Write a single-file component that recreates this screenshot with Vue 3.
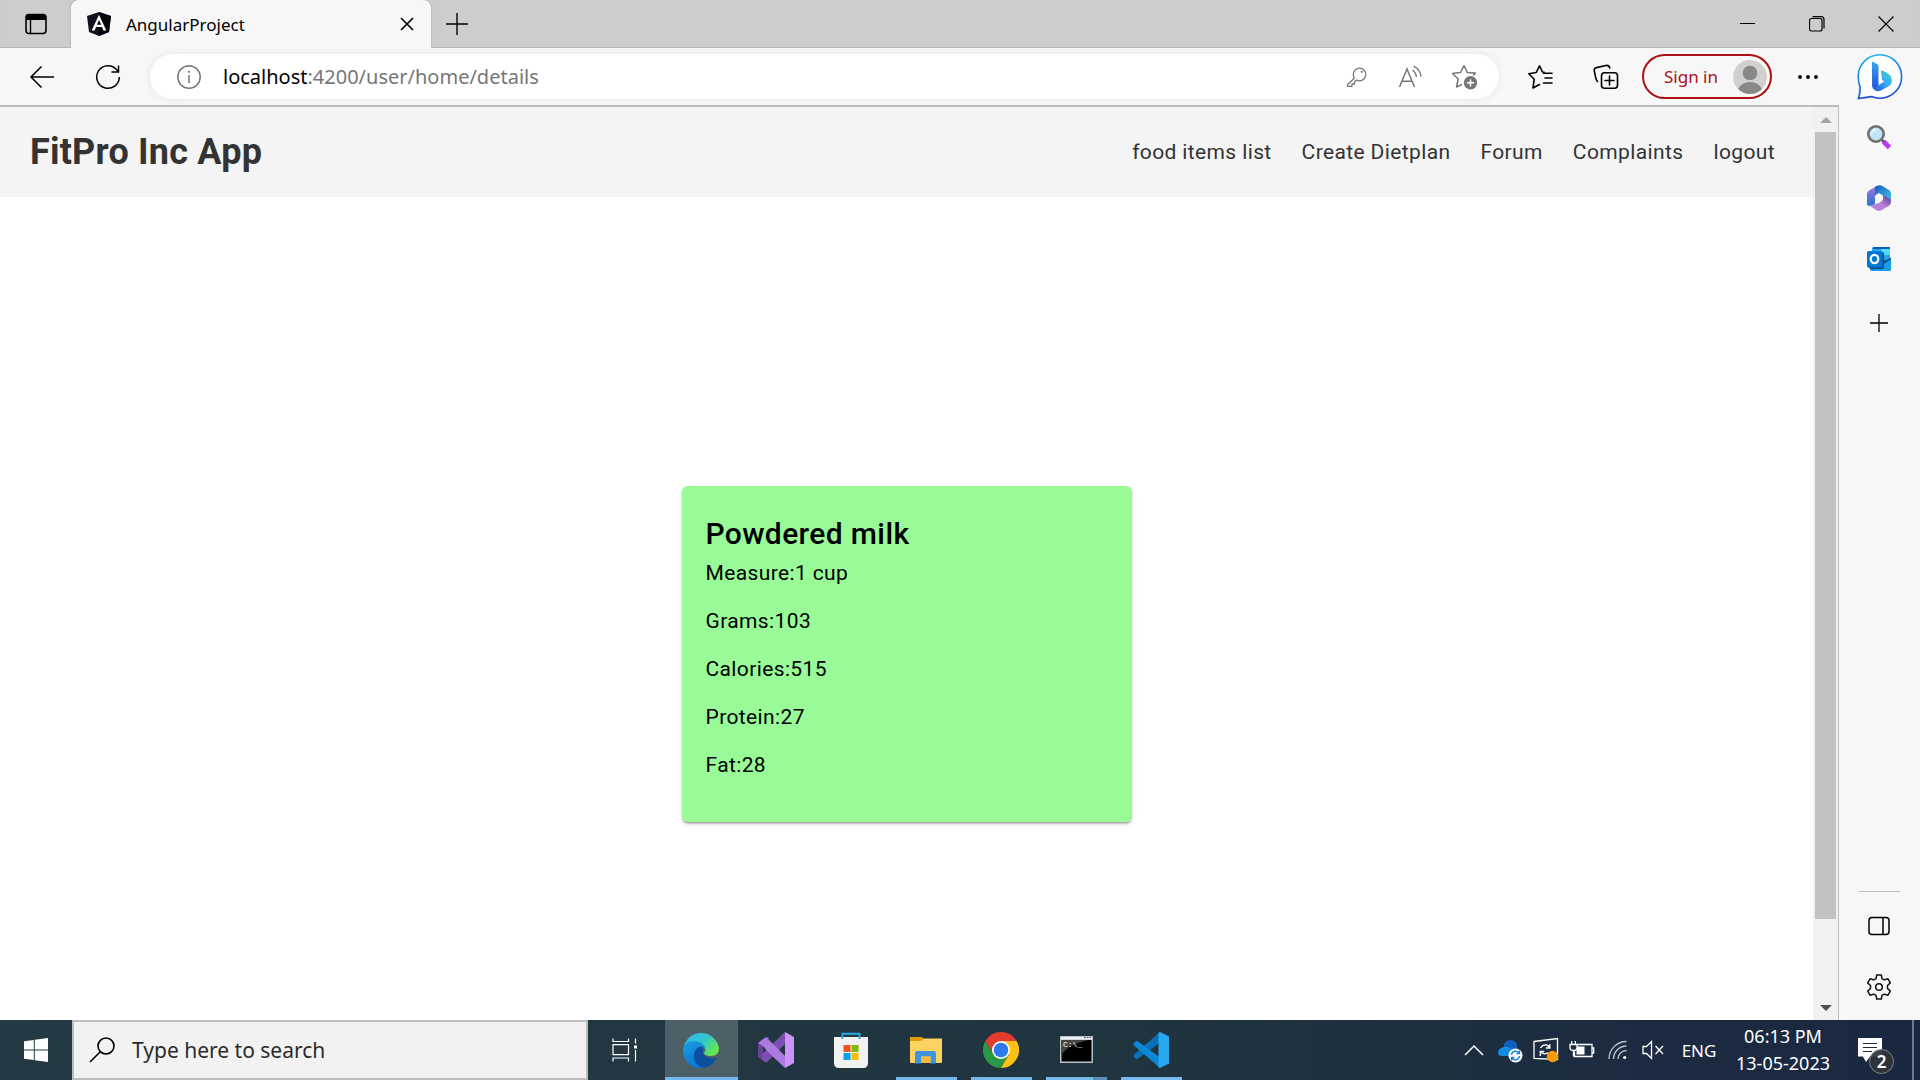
<script setup>
import { ref } from 'vue'

const path = ref(':4200/user/home/details')
const query = ref('')

const links = ['food items list', 'Create Dietplan', 'Forum', 'Complaints', 'logout']

const food = {
  name: 'Powdered milk',
  facts: [
    ['Measure', '1 cup'],
    ['Grams', '103'],
    ['Calories', '515'],
    ['Protein', '27'],
    ['Fat', '28'],
  ],
}
</script>

<template>
  <div class="desktop">
    <div class="tabstrip">
      <button class="tab-actions" aria-label="Tab actions">
        <svg width="24" height="24" viewBox="0 0 24 24"><rect x="2" y="2.5" width="20" height="19" rx="3" fill="none" stroke="#000" stroke-width="1.6" /><path d="M2 8V5q0-3 3-3h14q3 0 3 3v3z" /><path d="M6.500 8v13.500" stroke="#000" stroke-width="1.4" /></svg>
      </button>
      <div class="tab">
        <svg width="24" height="24" viewBox="0 0 24 24"><path d="M12 0l12 4-2 16-10 4-10-4L0 4z" fill="#10131f" /><path d="M12 0l12 4-2 16-10 4z" fill="#03050c" /><path d="M12 2.800L4.700 18.500h2.900l1.400-3.600h6l1.400 3.600h2.900zm0 5.300l2.200 4.700H9.800z" fill="#fff" fill-rule="evenodd" /></svg>
        <span class="tab-title">AngularProject</span>
        <button class="tab-close" aria-label="Close tab">
          <svg width="14" height="14" viewBox="0 0 14 14"><path d="M1 1l12 12M13 1L1 13" stroke="#000" stroke-width="1.6" /></svg>
        </button>
      </div>
      <button class="new-tab" aria-label="New tab">
        <svg width="22" height="22" viewBox="0 0 22 22"><path d="M11 0v22M0 11h22" stroke="#000" stroke-width="1.4" /></svg>
      </button>
      <div class="window-controls">
        <button aria-label="Minimize"><svg width="16" height="16" viewBox="0 0 16 16"><path d="M0 7.500h15" stroke="#000" /></svg></button>
        <button aria-label="Restore"><svg width="16" height="16" viewBox="0 0 16 16"><rect x=".5" y="2.500" width="12.500" height="12.500" rx="2" fill="none" stroke="#000" stroke-width="1.200" /><path d="M3.500.600h8.500a3 3 0 0 1 3 3v9" fill="none" stroke="#000" stroke-width="1.200" /></svg></button>
        <button aria-label="Close"><svg width="16" height="16" viewBox="0 0 16 16"><path d="M.5.5l15 15m0-15l-15 15" stroke="#000" stroke-width="1.200" /></svg></button>
      </div>
    </div>

    <div class="toolbar">
      <button class="tool" aria-label="Back">
        <svg width="26" height="24" viewBox="0 0 26 24"><path d="M25 12H2M12.500 1.500L2 12l10.500 10.500" fill="none" stroke="#000" stroke-width="1.500" /></svg>
      </button>
      <button class="tool" aria-label="Refresh">
        <svg width="26" height="26" viewBox="0 0 26 26"><path d="M24.300 13A11.300 11.300 0 1 1 21.800 5.900L23.500 8M23.500 1.500V8h-7" fill="none" stroke="#000" stroke-width="1.500" /></svg>
      </button>
      <div class="address">
        <button class="site-info" aria-label="Site information">
          <svg width="24" height="24" viewBox="0 0 24 24"><circle cx="12" cy="12" r="11.200" fill="none" stroke="#767676" stroke-width="1.500" /><path d="M12 10v8" stroke="#767676" stroke-width="1.500" /><circle cx="12" cy="6.800" r="1.100" fill="#767676" /></svg>
        </button>
        <label for="url">localhost</label>
        <input id="url" v-model="path" type="text" />
        <button class="address-tool" aria-label="Passwords">
          <svg width="22" height="22" viewBox="0 0 22 22" fill="none" stroke="#767676" stroke-width="1.300"><path d="M8 12.500L1.500 18.500V20.300H6V18H8.500V15.800L10.500 14a6.300 6.300 0 1 0-2.300-2.200z" stroke-linejoin="round" /><circle cx="15.800" cy="5.800" r="1.100" fill="#767676" stroke="none" /></svg>
        </button>
        <button class="address-tool" aria-label="Read aloud">
          <svg width="26" height="24" viewBox="0 0 26 24" fill="none" stroke="#767676" stroke-width="1.500"><path d="M1.500 22L9 4l7.500 18M4 16.300h10" /><path d="M14.500 5q3.500 2.500 4 7M15.500 1.200q7 3.500 7.500 10.500" stroke-width="1.300" /></svg>
        </button>
        <button class="address-tool" aria-label="Add to favorites">
          <svg width="28" height="28" viewBox="0 0 28 28"><path d="M13 2.500l3.300 7 8 .6-2 2.400M13 2.500l-3.500 7L1.500 10.500l5.700 5.500L5.500 24l5.500-2.500" fill="none" stroke="#767676" stroke-width="1.500" stroke-linejoin="round" /><circle cx="19.500" cy="19.800" r="6.700" fill="#767676" /><path d="M19.500 16.200v7.200M15.900 19.800h7.200" stroke="#fff" stroke-width="1.500" /></svg>
        </button>
      </div>
      <button class="tool" aria-label="Favorites">
        <svg width="26" height="26" viewBox="0 0 26 26" fill="none" stroke="#000" stroke-width="1.600" stroke-linejoin="round" stroke-linecap="round"><path d="M17 8.300l-1.500-.3L12.500 1.800 9.200 8.500 1.800 9.700l5.400 5.500L6 24l6.500-3.500M16.500 9.300H25M18 14h7M16.500 19H25" /></svg>
      </button>
      <button class="tool" aria-label="Collections">
        <svg width="26" height="26" viewBox="0 0 26 26" fill="none" stroke="#000" stroke-width="1.600" stroke-linecap="round"><path d="M4.500 17.500Q3.200 16 2.800 14L1.300 7Q.800 4.300 3.500 3.600L13 1.500Q16 1 16.800 4" /><rect x="8.500" y="8.800" width="16" height="15.500" rx="3" /><path d="M16.500 12v9M12 16.500h9" /></svg>
      </button>
      <button class="sign-in">
        <span>Sign in</span>
        <svg width="34" height="34" viewBox="0 0 34 34"><circle cx="17" cy="17" r="17" fill="#d2d0ce" /><circle cx="17" cy="13" r="7.300" fill="#8a8886" /><path d="M5 29q4-7 12-7t12 7q-5 5-12 5T5 29z" fill="#8a8886" /></svg>
      </button>
      <button class="more" aria-label="Settings and more">
        <svg width="20" height="4" viewBox="0 0 20 4"><circle cx="2" cy="2" r="1.900" /><circle cx="10" cy="2" r="1.900" /><circle cx="18" cy="2" r="1.900" /></svg>
      </button>
      <button class="bing" aria-label="Bing">
        <svg width="48" height="48" viewBox="0 0 48 48">
          <defs>
            <linearGradient id="bingRing" x1="0" y1="0" x2=".3" y2="1"><stop offset="0" stop-color="#17bdf0" /><stop offset="1" stop-color="#1c50d8" /></linearGradient>
            <linearGradient id="bingStem" x1="0" y1="0" x2="0" y2="1"><stop offset="0" stop-color="#37a5ee" /><stop offset="1" stop-color="#2050dc" /></linearGradient>
            <linearGradient id="bingBowl" x1="1" y1="0" x2="0" y2="1"><stop offset="0" stop-color="#30dfc9" /><stop offset=".5" stop-color="#3aa5f2" /><stop offset="1" stop-color="#1d54de" /></linearGradient>
          </defs>
          <path d="M2.500 46V24A21.800 21.800 0 1 1 24 45.500q-5-.500-8-1.800-5 1-13.500 2z" transform="translate(0 1)" fill="#000" opacity=".12" />
          <path d="M2.500 45.500Q4.500 39 4.200 34.500 2.200 29 2.200 23.500A21.700 21.700 0 1 1 24 45.200q-4 0-8.500-1.600-4 .4-13 1.900z" fill="#fff" stroke="url(#bingRing)" stroke-width="1.600" />
          <path d="M16 8.500l5 2.500q1.500.700 1.500 2.500v18.500l-3 5q-3.500-1-3.500-5z" fill="url(#bingStem)" />
          <path d="M25 18.500q-.500-1.500 1-1 10 3.500 10 10 0 3-2 5l-9.500 5.200q-5 1.500-6.800-2.200l10.500-7.300-2-1.200z" fill="url(#bingBowl)" />
        </svg>
      </button>
    </div>

    <div class="body">
      <div class="viewport">
        <div class="page">
          <header class="site-header">
            <h1>FitPro Inc App</h1>
            <nav>
              <a v-for="link in links" :key="link" href="#">{{ link }}</a>
            </nav>
          </header>
          <main>
            <article class="card">
              <h2>{{ food.name }}</h2>
              <p v-for="[label, value] in food.facts" :key="label">{{ label }}:{{ value }}</p>
            </article>
          </main>
        </div>
        <div class="scrollbar">
          <button aria-label="Scroll up"><svg width="12" height="6" viewBox="0 0 12 6"><path d="M6 0l6 6H0z" fill="#a3a3a3" /></svg></button>
          <div class="track"><div class="thumb"></div></div>
          <button aria-label="Scroll down"><svg width="12" height="6" viewBox="0 0 12 6"><path d="M6 6l6-6H0z" fill="#505050" /></svg></button>
        </div>
      </div>

      <aside class="sidebar">
        <button aria-label="Search">
          <svg width="26" height="26" viewBox="0 0 26 26"><path d="M17.500 17.500l6 6" stroke="#b83cf5" stroke-width="5" /><path d="M15.500 15.500l2.500 2.500" stroke="#5d5d5d" stroke-width="2.500" /><circle cx="10" cy="10" r="7.700" fill="#bfe3f8" stroke="#6f6f6f" stroke-width="2.600" /><path d="M5.500 10.500a5 5 0 0 1 5-5" stroke="#e3f4fd" stroke-width="2" fill="none" /></svg>
        </button>
        <button aria-label="Microsoft 365">
          <svg width="26" height="26" viewBox="0 0 26 26">
            <defs>
              <linearGradient id="mLeft" x1="0" y1="0" x2="0" y2="1"><stop offset="0" stop-color="#a779dc" /><stop offset=".6" stop-color="#5a6fd8" /><stop offset="1" stop-color="#2d79cf" /></linearGradient>
              <linearGradient id="mTop" x1="0" y1="0" x2="1" y2="1"><stop offset="0" stop-color="#155bb4" /><stop offset="1" stop-color="#49c7f7" /></linearGradient>
              <linearGradient id="mBottom" x1="1" y1="0" x2="0" y2="1"><stop offset="0" stop-color="#533b92" /><stop offset=".5" stop-color="#b67fd8" /><stop offset="1" stop-color="#b286e0" /></linearGradient>
            </defs>
            <path d="M11 1L3 5.500Q1 6.600 1 9v9.500Q1 21 3.500 21 6 21 9 19V11q0-2 2-3z" fill="url(#mLeft)" />
            <path d="M9 1.800Q13-1 16.500 1l6.500 4q2 1.200 2 3.500v8.500L17 12V11l-4-3-4 3z" fill="url(#mTop)" />
            <path d="M17 14v-3.500l6 2.500q2 1 2 3.500 0 3-2 4.200l-7 4.300q-3 1.700-6 0L4.500 21.200 9.500 19l3.500-1z" fill="url(#mBottom)" />
            <circle cx="13" cy="13" r="4.200" fill="#f7f7f7" />
          </svg>
        </button>
        <button aria-label="Outlook">
          <svg width="26" height="26" viewBox="0 0 26 26"><path d="M6 3q0-2 2-2h15q1 0 1 1v14H6z" fill="#28a8ea" /><path d="M15 1.500h9v7.500h-9z" fill="#50d9ff" /><path d="M7 1h17v2H7z" fill="#0a5fb0" /><path d="M4 14h21v9q0 2-2 2H6q-2 0-2-2z" fill="#1490df" /><path d="M25 11.500v13L15 16.500z" fill="#0f4d90" /><path d="M25 13v10.500q0 1.500-2 1.500H6l12-7z" fill="#189be8" /><rect x="3" y="6" width="15" height="17" rx="2" fill="#0b4a88" /><rect x="1" y="5" width="15.500" height="16.500" rx="1.500" fill="#0078d4" /><ellipse cx="8.500" cy="13" rx="3.800" ry="4.100" fill="none" stroke="#fff" stroke-width="2.200" /></svg>
        </button>
        <button class="add-app" aria-label="Customize sidebar">
          <svg width="18" height="18" viewBox="0 0 18 18"><path d="M9 0v18M0 9h18" stroke="#000" stroke-width="1.300" /></svg>
        </button>
        <hr />
        <button aria-label="Hide sidebar">
          <svg width="22" height="20" viewBox="0 0 22 20" fill="none" stroke="#000" stroke-width="1.500"><rect x="1" y="1.500" width="20" height="17" rx="3" /><path d="M15 1.500v17" /></svg>
        </button>
        <button aria-label="Sidebar settings">
          <svg width="26" height="26" viewBox="0 0 26 26" fill="none" stroke="#111" stroke-width="1.500" stroke-linejoin="round"><path d="M10.700 1h4.600l.7 3.600 2.200 1.300L21.800 4.700l2.500 4.200L21.500 11.500v3l2.800 2.600-2.500 4.200-3.600-1.200L16 21.400 15.300 25h-4.600L10 21.400l-2.200-1.300-3.600 1.200-2.500-4.200 2.800-2.600v-3L1.700 8.900l2.500-4.200L7.800 5.900 10 4.600z" /><circle cx="13" cy="13" r="3.300" /></svg>
        </button>
      </aside>
    </div>

    <footer class="taskbar">
      <button class="start" aria-label="Start">
        <svg width="24" height="24" viewBox="0 0 24 24" fill="#fff"><path d="M0 3.300L9.800 2v9.500H0zM10.800 1.800L24 0v11.500H10.800zM0 12.500h9.800V22L0 20.700zM10.800 12.500H24V24l-13.200-1.800z" /></svg>
      </button>
      <label class="search">
        <svg width="26" height="26" viewBox="0 0 26 26" fill="none" stroke="#000" stroke-width="1.600"><circle cx="17" cy="9" r="8" /><path d="M11.300 14.700L1 25" /></svg>
        <input v-model="query" type="text" placeholder="Type here to search" aria-label="Type here to search" />
      </label>
      <button class="task" aria-label="Task view">
        <svg width="26" height="24" viewBox="0 0 26 24" fill="none" stroke="#fff" stroke-width="1.200"><path d="M1 .5v3h15.500v-3M1 23.500v-3.500h15.500v3.500M1 6.700h15.500v10H1zM23.500.5v5M23.500 12v11.500" /><path d="M22 7.500h3v3h-3z" fill="#fff" stroke="none" /></svg>
      </button>
      <button class="task active open" aria-label="Microsoft Edge">
        <svg width="36" height="36" viewBox="0 0 36 36">
          <defs>
            <linearGradient id="edgeTop" x1="0" y1="0" x2="1" y2=".6"><stop offset="0" stop-color="#35b8f0" /><stop offset=".55" stop-color="#2fc6cf" /><stop offset="1" stop-color="#66e84c" /></linearGradient>
            <linearGradient id="edgeLeft" x1="0" y1="0" x2=".5" y2="1"><stop offset="0" stop-color="#1aa0e0" /><stop offset="1" stop-color="#0a76d6" /></linearGradient>
          </defs>
          <path d="M1 14A18 18 0 0 1 36 16q0 8-8 8-7 0-7-3.500 1.500-1.500 1.500-3.500L12 10z" fill="url(#edgeTop)" />
          <path d="M0 18Q.5 9.500 10 9q10 0 12.500 8-4-4-8-1-3 3-2 9.500Q14.500 33 22 35.500 10 38 3.500 29 0 24 0 18z" fill="url(#edgeLeft)" />
          <path d="M15 15.700Q17 14 20.500 15q-2.500 5 1 8.500 5 4.500 11.500 2 1-.3.700.7Q29 34.500 21 35.700q-8.500-2-10-9-1-7.500 4-11z" fill="#0c4fa0" />
        </svg>
      </button>
      <button class="task" aria-label="Visual Studio">
        <svg width="36" height="36" viewBox="0 0 36 36"><path d="M0 11l5-4v22l-5-4z" fill="#6a4399" /><path d="M5 7l5-2 1 1L5 15z" fill="#8a5cbf" /><path d="M5 29l3.500 1.500L27 12V0L4 22z" fill="#7a4fb0" /><path d="M0 11l8-6 19 19v12L10 20 5 14z" fill="#ad7ae0" /><path d="M27 0l9 5v26l-9 5z" fill="#cc94fb" /></svg>
      </button>
      <button class="task" aria-label="Microsoft Store">
        <svg width="36" height="36" viewBox="0 0 36 36"><path d="M1 5h34v26q0 5-5 5H6q-5 0-5-5z" fill="#f2f2f2" /><path d="M9.500 7V1.700h17V7" fill="none" stroke="#25abe8" stroke-width="2" /><path d="M10.500 13h7v7h-7z" fill="#f25022" /><path d="M18.500 13h7v7h-7z" fill="#7fba00" /><path d="M10.500 21h7v7h-7z" fill="#00a4ef" /><path d="M18.500 21h7v7h-7z" fill="#ffb900" /></svg>
      </button>
      <button class="task open inset" aria-label="File Explorer">
        <svg width="36" height="36" viewBox="0 0 36 36"><path d="M2 5h12l2 2-2 4H2z" fill="#dd9b00" /><path d="M2 9h11l3-2.500h18V30q0 1-1 1H3q-1 0-1-1z" fill="#fdd263" /><path d="M7 31.500V21q0-2 2-2h17q2 0 2 2v10.500h-5.500V24.500h-9.500v7z" fill="#3b96df" /><path d="M13 24.500h9.500V31H13z" fill="#f5b93b" /></svg>
      </button>
      <button class="task open inset" aria-label="Google Chrome">
        <svg width="36" height="36" viewBox="0 0 36 36"><path d="M2.400 9A18 18 0 0 1 33.600 9H18L10.200 22.500z" fill="#e33b2e" /><path d="M2.400 9A18 18 0 0 0 18 36l7.800-13.500H10.200z" fill="#2a9947" /><path d="M33.600 9A18 18 0 0 1 18 36l7.800-13.500L18 9z" fill="#fdc117" /><circle cx="18" cy="18" r="9" fill="#fff" /><circle cx="18" cy="18" r="7.300" fill="#2d7bea" /></svg>
      </button>
      <button class="task open inset stacked" aria-label="Command Prompt">
        <svg width="36" height="36" viewBox="0 0 36 36"><path d="M2 4h33v27H2z" fill="#b9c2c8" /><path d="M3 5h31v2.500H3z" fill="#e9eef2" /><path d="M3.500 8h30v21.500h-30z" fill="#000" /><path d="M3.500 8h28Q10 12 3.500 23z" fill="#444" /><text x="5" y="15" font-family="Liberation Mono, monospace" font-size="8" fill="#fff">C:\_</text><path d="M26 5.500h2M29 5.500h1.500M31.500 5.500H33" stroke="#556" /></svg>
      </button>
      <button class="task open inset" aria-label="Visual Studio Code">
        <svg width="36" height="36" viewBox="0 0 36 36"><path d="M1 22.500L27 0l1 10L5 26.500q-1.500 1-2.500 0L1 25q-1.200-1.200 0-2.500z" fill="#0b70b8" /><path d="M1 13.500L27 36l1-10L5 9.500q-1.500-1-2.500 0L1 11q-1.200 1.200 0 2.500z" fill="#0d88d4" /><path d="M27 0l9 4.500v27L27 36l-1.500-1V1z" fill="#27a9f2" /></svg>
      </button>

      <div class="tray">
        <button class="chevron" aria-label="Show hidden icons"><svg width="20" height="12" viewBox="0 0 20 12"><path d="M1 11l9-9 9 9" fill="none" stroke="#fff" stroke-width="1.500" /></svg></button>
        <button aria-label="OneDrive"><svg width="26" height="26" viewBox="0 0 26 26"><circle cx="13.500" cy="10" r="7" fill="#0f5fc0" /><path d="M1 16q0-5 6-6 5-1 9 3.500L19 12q6 0 6 7H5q-4 0-4-3z" fill="#158be4" /><circle cx="18.500" cy="18.500" r="7" fill="#fff" /><path d="M14.500 18a4.200 4.200 0 0 1 7.800-1.800M22.500 19a4.200 4.200 0 0 1-7.800 1.800M22.500 13.500v3h-3M14.500 23.500v-3h3" fill="none" stroke="#147fd8" stroke-width="1.300" /></svg></button>
        <button aria-label="Updates"><svg width="26" height="26" viewBox="0 0 26 26"><path d="M1 4.500L24.500 1.500v21L1 21.500z" fill="none" stroke="#fff" stroke-width="1.300" /><path d="M7.500 11q2-3.500 6-3 2 .3 3 2.500M16.800 7v4h-4M15 15.500q-4 3-7-.5M7.300 19v-4.500h4" fill="none" stroke="#fff" stroke-width="1.300" /><circle cx="19.500" cy="19.500" r="5.700" fill="#ff9a0a" /></svg></button>
        <button aria-label="Battery"><svg width="26" height="26" viewBox="0 0 26 26"><path d="M8 7.500h15v12H5.500v-5M23 11h1.700v5H23" fill="none" stroke="#fff" stroke-width="1.300" /><path d="M7.500 9.500h8v8h-8z" fill="#fff" /><path d="M1 7.500h7v3q0 3-3.500 3T1 10.500zM2.700 7V4M6.300 7V4M4.500 13.500v6" fill="#1d2e42" stroke="#fff" stroke-width="1.300" /></svg></button>
        <button aria-label="Network"><svg width="26" height="26" viewBox="0 0 26 26" fill="none" stroke="#b9c3cd" stroke-width="1.400"><path d="M4 22A17.500 17.500 0 0 1 21.500 4.500M8.500 22a13 13 0 0 1 13-13M13 22a8.500 8.500 0 0 1 8.500-8.500" /><circle cx="19.700" cy="20.500" r="1.600" fill="#fff" stroke="none" /></svg></button>
        <button aria-label="Volume"><svg width="26" height="26" viewBox="0 0 26 26" fill="none" stroke="#fff" stroke-width="1.300"><path d="M2 9.500h3.500L10.500 4.500v17L5.500 16.500H2zM14.500 9l7.500 8M22 9l-7.500 8" /></svg></button>
        <button class="lang">ENG</button>
        <button class="clock"><span>06:13 PM</span><span>13-05-2023</span></button>
        <button class="notifications" aria-label="Notifications">
          <svg width="24" height="24" viewBox="0 0 24 24"><path d="M0 0h24v18.500H12L8 24l-3-5.500H0z" fill="#fff" /><path d="M5 5.500h14M5 9.500h14M5 13.500h9" stroke="#1b2a42" stroke-width="1.200" /></svg>
          <span class="badge">2</span>
        </button>
        <button class="show-desktop" aria-label="Show desktop"></button>
      </div>
    </footer>
  </div>
</template>

<style>
body {
  margin: 0;
}
</style>

<style scoped>
.desktop {
  display: flex;
  flex-direction: column;
  height: 100vh;
  overflow: hidden;
  background: #f7f7f7;
  color: #000;
  font-family: "Noto Sans", "Open Sans", sans-serif;
}
button {
  display: flex;
  align-items: center;
  justify-content: center;
  flex: none;
  padding: 0;
  border: 0;
  background: none;
  color: inherit;
  font: inherit;
}
input {
  flex: 1;
  min-width: 0;
  padding: 0;
  border: 0;
  outline: 0;
  background: none;
  font: inherit;
}
svg {
  display: block;
  flex: none;
}

/* browser chrome */
.tabstrip {
  display: flex;
  flex: none;
  height: 48px;
  background: #cdcdcd;
  box-shadow: inset 0 -1px 1px #b4b4b4;
}
.tab-actions {
  width: 71px;
}
.tab {
  display: flex;
  align-items: center;
  width: 360px;
  box-sizing: border-box;
  padding: 0 17px 0 16px;
  gap: 15px;
  border-radius: 8px 8px 0 0;
  background: #f7f7f7;
  box-shadow: 0 0 2px #999;
  clip-path: inset(0 -3px);
}
.tab-title {
  flex: 1;
  font-size: 17px;
}
.new-tab {
  width: 52px;
}
.window-controls {
  display: flex;
  margin-left: auto;
}
.window-controls button {
  width: 69px;
}
.toolbar {
  display: flex;
  align-items: center;
  flex: none;
  height: 57px;
  padding: 0 16px 0 9px;
}
.tool {
  width: 66px;
}
.address {
  display: flex;
  align-items: center;
  flex: 1;
  height: 45px;
  margin: 0 8px 0 9px;
  padding: 0 7px 0 27px;
  box-sizing: border-box;
  border-radius: 23px;
  background: #fff;
  box-shadow: 0 0 6px #e4e4e4;
  font-size: 20px;
}
.site-info {
  margin-right: 22px;
}
.address input {
  color: #767676;
}
.address-tool {
  width: 54px;
}
.sign-in {
  justify-content: space-between;
  width: 130px;
  height: 45px;
  margin-left: 3px;
  padding: 0 3px 0 20px;
  border: 2px solid #ad1015;
  border-radius: 23px;
  color: #ad1015;
  font-size: 17px;
}
.more {
  width: 72px;
}
.bing {
  margin-left: 12px;
}

/* page area */
.body {
  display: flex;
  flex: 1;
  min-height: 0;
}
.viewport {
  display: flex;
  flex: 1;
  min-width: 0;
  border-top: 2px solid #bdbdbd;
  border-right: 1px solid #bdbdbd;
  background: #fff;
}
.page {
  display: flex;
  flex-direction: column;
  flex: 1;
  overflow: hidden;
  font-family: Roboto, sans-serif;
}
.site-header {
  display: flex;
  align-items: center;
  justify-content: space-between;
  flex: none;
  height: 90px;
  padding: 0 38px 0 30px;
  background: #f4f4f4;
  color: #333;
}
h1 {
  margin: 0;
  font-size: 36px;
  font-weight: 700;
  letter-spacing: 0.006em;
}
nav {
  display: flex;
  gap: 30px;
}
nav a {
  color: inherit;
  font-size: 21px;
  line-height: 32px;
  letter-spacing: 0.018em;
  text-decoration: none;
}
main {
  display: flex;
  align-items: center;
  justify-content: center;
  flex: none;
  height: 100%;
}
.card {
  width: 450px;
  padding: 24px;
  box-sizing: border-box;
  border-radius: 6px;
  background: #98fb98;
  box-shadow: 0 3px 2px -2px #00000033, 0 2px 2px #00000024, 0 2px 5px #0000001f;
}
h2 {
  margin: 0;
  font-size: 30px;
  font-weight: 500;
  line-height: 48px;
  letter-spacing: 0.0125em;
}
.card p {
  margin: 0 0 18px;
  font-size: 21px;
  line-height: 30px;
  letter-spacing: 0.018em;
}
.scrollbar {
  display: flex;
  flex-direction: column;
  width: 25px;
  background: #f1f1f1;
}
.scrollbar button {
  height: 25px;
}
.track {
  flex: 1;
  padding: 0 2px;
}
.thumb {
  height: 91.2%;
  background: #c1c1c1;
}
.sidebar {
  display: flex;
  flex-direction: column;
  align-items: center;
  gap: 25px;
  width: 81px;
  padding: 14px 1px 15px 0;
  box-sizing: border-box;
}
.sidebar button {
  width: 48px;
  height: 36px;
}
.sidebar .add-app {
  margin-top: 3px;
}
hr {
  width: 42px;
  height: 1px;
  margin: auto 0 -9px;
  border: 0;
  background: #bdbdbd;
}

/* taskbar */
.taskbar {
  display: flex;
  flex: none;
  height: 60px;
  background: linear-gradient(90deg, #243a42, #20343f 60%, #1c2b41 85%, #1a2740);
  color: #fff;
}
.start {
  width: 72px;
}
.search {
  display: flex;
  align-items: center;
  gap: 17px;
  width: 516px;
  padding: 0 15px;
  box-sizing: border-box;
  border: 2px solid #bdbdbd;
  background: #f2f2f2;
  font-size: 21px;
}
.search input::placeholder {
  color: #2b2b2b;
  opacity: 1;
}
.task {
  position: relative;
  width: 75px;
  padding-right: 2px;
}
.task.active {
  width: 73px;
  margin: 0 1px 0 2px;
  background: #4d6068;
}
.task.open::after {
  content: "";
  position: absolute;
  right: 0;
  bottom: 0;
  left: 0;
  height: 3px;
  background: #76b9ed;
}
.task.inset::after {
  right: 7px;
  left: 7px;
}
.task.stacked::after {
  background: linear-gradient(90deg, #76b9ed 77%, #5a8fba 77%);
}
.tray {
  display: flex;
  margin-left: auto;
}
.tray button {
  width: 36px;
}
.tray .chevron {
  width: 37px;
}
.tray .lang {
  width: 54px;
  font-size: 17px;
}
.tray .clock {
  flex-direction: column;
  width: 114px;
  font-size: 18px;
  line-height: 27px;
}
.tray .notifications {
  position: relative;
  width: 60px;
}
.badge {
  position: absolute;
  top: 29px;
  right: 6px;
  width: 23px;
  height: 23px;
  border: 1px solid #7c8288;
  border-radius: 50%;
  background: #30353bee;
  font-size: 17px;
  font-weight: 600;
  line-height: 23px;
}
.tray .show-desktop {
  width: 8px;
  margin-left: 12px;
  border-left: 2px solid #6f7b88;
}
</style>
